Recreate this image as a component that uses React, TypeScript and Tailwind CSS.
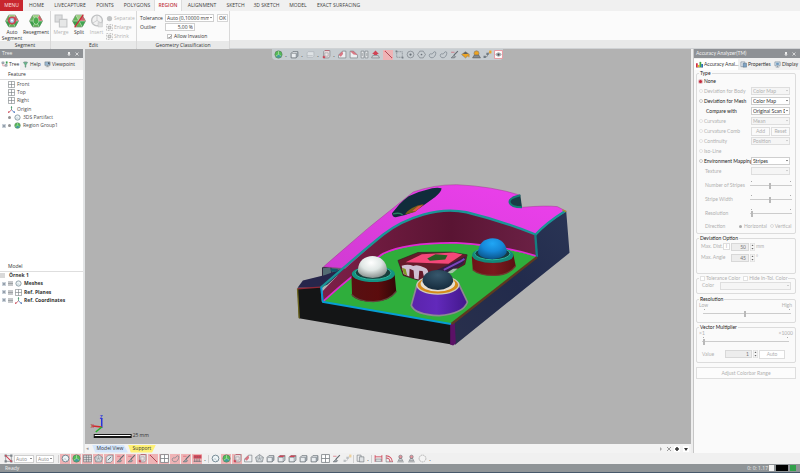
import React from "react";

type IconName =
  | "cube" | "sphere" | "globe" | "grid" | "mesh" | "poly" | "line" | "rect" | "circle" | "target"
  | "lasso" | "brush" | "bucket" | "bucket2" | "points" | "eye" | "half" | "halfR" | "book" | "arrow"
  | "axes" | "plane" | "corner" | "redcube" | "ghost" | "table" | "measure" | "angle" | "stamp" | "ring"
  | "copy" | "cross" | "help" | "view" | "tree" | "chart" | "props" | "display";

const dark = "#646b71";
const red = "#d04456";

function Glyph({ name }: { name: IconName }) {
  switch (name) {
    case "cube":
      return <><path d="M2 6l3-3h9v8l-3 3H2z" fill="#e9edf0" stroke={dark} strokeWidth="1.400" /><path d="M3 6h8v8" stroke={dark} fill="none" /><path d="M11 6l3-3v8l-3 3z" fill="#8d969d" /></>;
    case "redcube":
      return <><path d="M2 6l3-3h9v8l-3 3H2z" fill="#e9edf0" stroke={dark} strokeWidth="1.400" /><path d="M3 6h8v8M11 6l3-3" stroke={dark} fill="none" /><path d="M2 5.500l3-3h9l-3 3z" fill={red} /></>;
    case "ghost":
      return <path d="M2 5l2-2h10v8l-2 2H2zM2 10h10" fill="#dfe3e6" stroke="#a5acb2" />;
    case "sphere":
      return <><circle cx="8" cy="8" r="6" fill="#eef5f7" stroke="#6c828d" strokeWidth="1.6" /><path d="M4 11l3-3 3 4" fill="none" stroke="#9aabb3" /></>;
    case "globe":
      return <><circle cx="8" cy="8" r="6.5" fill="#53bb55" stroke="#5d7468" /><path d="M8 2v6l5 3M8 8l-5 3" stroke="#d8ecd0" fill="none" /><path d="M8 8l5 3a6 6 0 01-9 1z" fill="#3a8fbd" opacity=".7" /></>;
    case "grid":
      return <><path d="M1 2h14v12H1z" fill="#ddd" stroke={dark} /><path d="M1 6h14M1 10h14M6 2v12M10 2v12" stroke={dark} /></>;
    case "mesh":
      return <><path d="M8 1l7 5-2 8H3L1 6z" fill="#d5dadd" stroke={dark} /><path d="M1 6l7 2 7-2M8 8l-5 6M8 8l5 6M8 1v7" stroke="#8e969c" fill="none" /></>;
    case "poly":
      return <><path d="M2 6l4-4h8v9l-4 4H2z" fill="#dce4e8" stroke={dark} /><path d="M5 11l6-6" stroke={dark} strokeWidth="1.6" /></>;
    case "line":
      return <><path d="M2 2l12 12" stroke="#9c3945" strokeWidth="1.5" /><circle cx="2.5" cy="2.5" r="1.2" fill={red} /><circle cx="13.5" cy="13.5" r="1.2" fill={red} /></>;
    case "rect":
      return <><path d="M3 3h10v10H3z" fill="none" stroke="#697178" strokeDasharray="2 1" /><path d="M1 1h3v3H1zM12 12h3v3h-3z" fill="#777f86" /></>;
    case "circle":
      return <><circle cx="8" cy="8" r="6" fill="none" stroke="#697178" /><circle cx="8" cy="8" r="2" fill="#697178" /></>;
    case "target":
      return <><path d="M5 2h6l4 6-4 6H5L1 8z" fill="none" stroke="#697178" /><circle cx="8" cy="8" r="1.5" fill="#697178" /></>;
    case "lasso":
      return <path d="M3 12c-2-3 0-6 3-5s3-4 6-4 2 5 0 8-7 4-9 1z" fill="none" stroke="#78828a" strokeWidth="1.300" />;
    case "arrow":
      return <><path d="M8 1l6 6h-3v2H5V7H2z" fill={red} /><path d="M1 14l2-4h10l2 4z" fill="#d6dadd" stroke={dark} /></>;
    case "brush":
      return <><path d="M2 14l5-5 3 3-2 2z" fill="#9ba3a8" stroke={dark} /><path d="M7 9l7-7" stroke={dark} strokeWidth="2" /><path d="M2 4h6" stroke={red} /></>;
    case "bucket":
      return <><path d="M1 8l7-5 7 5-7 6z" fill="#eda423" stroke="#777" /><path d="M3 7l5-4 5 4" fill="#5d6265" /><path d="M14 9v4" stroke="#d88d1a" strokeWidth="2" /></>;
    case "bucket2":
      return <><circle cx="8" cy="6" r="4.500" fill="#eda423" stroke="#777" /><path d="M1 14l3-5h8l3 5z" fill="#838b90" stroke="#555" /></>;
    case "points":
      return <><path d="M2 12h5l3-7h4" stroke={dark} fill="none" /><path d="M11 1h4v5h-4z" fill="#eda423" /><path d="M1 10h4v4H1zM6 5h4v4H6z" fill="#717b82" /></>;
    case "eye":
      return <><path d="M1 1h14v14H1z" fill="#fff" stroke="#e88b94" strokeWidth="1.500" /><path d="M3 8q5-6 10 0-5 6-10 0z" fill="#c7cbce" stroke={dark} /><circle cx="8" cy="8" r="2" fill="#444a50" /></>;
    case "half":
      return <><path d="M1 14V9l7-7h6v12z" fill="#edf0f2" stroke={dark} /><path d="M1 9l7-7 1 5-4 5z" fill={red} opacity=".7" /></>;
    case "halfR":
      return <><path d="M15 14V9L8 2H2v12z" fill="#edf0f2" stroke={dark} /><path d="M2 2h6l7 7-7-1z" fill={red} opacity=".7" /></>;
    case "book":
      return <path d="M2 2h5v12H2zM9 2h5v12H9zM4 5v6M12 5v6" fill="#f0f2f3" stroke={dark} />;
    case "axes":
      return <><path d="M8 2v7" stroke="#3b915c" strokeWidth="1.6" /><path d="M8 9l-6 5" stroke="#c43a48" strokeWidth="1.6" /><path d="M8 9l6 5" stroke="#3565b5" strokeWidth="1.6" /><path d="M6 3.500L8 0l2 3.500" fill="#2f8a5a" /><path d="M0 15.500v-4l4 4z" fill="#c43a48" /><path d="M16 15.500v-4l-4 4z" fill="#3565b5" /></>;
    case "plane":
      return <path d="M1 1h14v14H1zM1 8h14M8 1v14" fill="#fff" stroke="#777d81" strokeWidth="1.400" />;
    case "corner":
      return <><path d="M3 3l2-2h9v10l-2 3H3z" fill="#f0e3e5" stroke={dark} /><path d="M2 11h3v3H2zM5 1h8" fill={red} stroke={red} /><path d="M5 5h6v6H5z" fill="none" stroke="#8d949a" /></>;
    case "table":
      return <><path d="M1 2h14v6H1z" fill={red} /><path d="M3 8v6M7 8v6M11 8v6M1 13h14M3 5h2M7 5h2M11 5h2" stroke={dark} strokeWidth="1.200" /></>;
    case "measure":
      return <><path d="M2 2v12M14 2v12M2 5h12" stroke={red} strokeWidth="1.500" /><path d="M3 9h10v4H3z" fill="#e7e9ea" stroke={dark} /></>;
    case "angle":
      return <><path d="M2 2v12h12" stroke={dark} fill="none" /><path d="M2 3a11 11 0 0111 11M2 7a7 7 0 017 7" stroke={red} strokeWidth="1.800" fill="none" /></>;
    case "stamp":
      return <><path d="M2 14h12M4 12h8L10 8H6z" fill="#cfd3d6" stroke={dark} /><circle cx="8" cy="5" r="3" fill="#e6969f" stroke={dark} /></>;
    case "ring":
      return <circle cx="8" cy="8" r="6" fill="#f4f4f4" stroke="#aaa" strokeWidth="1.500" strokeDasharray="3 1" />;
    case "copy":
      return <><path d="M2 2h7v11H2z" fill="#f1f2f3" stroke={dark} /><path d="M6 5h8v9H6z" fill="#dfe2e4" stroke={dark} /></>;
    case "cross":
      return <><path d="M3 3h10v10H3z" fill="#f4f4f4" stroke={dark} /><path d="M1 1h4v4H1zM11 11h4v4h-4zM11 1h4v4h-4zM1 11h4v4H1z" fill="#7d848a" /><path d="M2 2l12 12" stroke={red} strokeWidth="2" /></>;
    case "help":
      return <><path d="M3 3h10l-4 6v5H7V9z" fill="#65b98a" stroke="#598571" /><path d="M5 2h6" stroke={dark} /></>;
    case "view":
      return <><path d="M2 2h12v8H2z" fill="#9ab9d2" stroke={dark} /><path d="M4 13h8M8 10v3M9 4h3v4" stroke={dark} /></>;
    case "tree":
      return <><path d="M2 2h5v4H2zM9 8h5v4H9z" fill="#b9cddc" stroke={dark} /><path d="M4 6v5h5" stroke={red} fill="none" /><path d="M11 1h4v5h-4z" fill="#3a9d52" /></>;
    case "chart":
      return <><path d="M0 15h16" stroke={dark} /><path d="M0 5h4v9H0z" fill="#d02f48" /><path d="M4 9h4v5H4z" fill="#eab224" /><path d="M8 2h4v12H8z" fill="#41a747" /><path d="M12 7h4v7h-4z" fill="#296cb4" /></>;
    case "props":
      return <><path d="M2 2h9v11H2z" fill="#dfe7ef" stroke="#536577" /><path d="M7 5h8v9H7z" fill="#7ea3c4" stroke="#536577" /></>;
    case "display":
      return <><path d="M2 2h12v9H2z" fill="#d5e3ee" stroke="#536577" /><path d="M5 4h6v5H5z" fill="#6f99be" /><path d="M4 14h8M8 11v3" stroke="#536577" /></>;
  }
}

function Icon({ name, className = "size-[9px]" }: { name: IconName; className?: string }) {
  return (
    <svg viewBox="0 0 16 16" className={`shrink-0 ${className}`} aria-hidden="true">
      <Glyph name={name} />
    </svg>
  );
}

function HexIcon({ variant }: { variant: "auto" | "plain" | "split" }) {
  return (
    <svg viewBox="0 0 26 26" className="size-[14px]" aria-hidden="true">
      <path d="M7 2h12l6 11-6 11H7L1 13z" fill="#62b655" stroke="#7d927c" strokeWidth="1.500" />
      <path d="M7 2h12l-6 11z" fill="#9ecf86" />
      <path d="M19 2l6 11H13z" fill="#d3606b" />
      <path d="M1 13h12L7 24z" fill="#3d9d4a" />
      <path d="M13 13h12l-6 11z" fill="#42a552" />
      <path d="M1 13h24M7 2l12 22M19 2L7 24" stroke="#e6efe3" strokeWidth="1" />
      {variant === "auto" && <><circle cx="13" cy="12" r="6" fill="#a3c0e0" stroke="#cb4553" strokeWidth="3" /><circle cx="13" cy="12" r="2" fill="#fff" /></>}
      {variant === "plain" && <path d="M8 9l5-4 5 4v7l-5 4-5-4z" fill="#4bab4e" stroke="#dcead6" />}
      {variant === "split" && <path d="M21 1L5 25" stroke="#c62d3a" strokeWidth="2.500" />}
    </svg>
  );
}

function GhostIcon({ round = false }: { round?: boolean }) {
  return (
    <svg viewBox="0 0 26 26" className="size-[14px]" aria-hidden="true">
      {round ? (
        <><circle cx="13" cy="12" r="10" fill="#f1f1f1" stroke="#bfc1c2" strokeWidth="2.500" /><path d="M13 3v9l8 5M13 12l-8 5" fill="none" stroke="#c6c7c8" strokeWidth="1.500" /><path d="M15 16h8v8h-8z" fill="#e0e0e0" stroke="#c2c3c4" /></>
      ) : (
        <><path d="M2 2h13v13H2z" fill="#dcddde" stroke="#c2c4c5" strokeWidth="2" /><path d="M10 10h14v14H10z" fill="#e6e7e7" stroke="#c2c4c5" strokeWidth="2" /></>
      )}
    </svg>
  );
}

const ribbonTabs = [
  ["HOME", "w-[27px]"], ["LIVECAPTURE", "w-[40px]"], ["POINTS", "w-[30px]"], ["POLYGONS", "w-[34px]"],
  ["REGION", "w-[28px]"], ["ALIGNMENT", "w-[40px]"], ["SKETCH", "w-[27px]"], ["3D SKETCH", "w-[35px]"],
  ["MODEL", "w-[28px]"], ["EXACT SURFACING", "w-[53px]"],
];

function RibbonTabs() {
  return (
    <nav className="flex h-[11px] shrink-0 bg-[#f0f0f0] text-[5px] leading-[11px] text-[#3c3c3c]">
      <button className="w-[23px] bg-[#c8262e] text-[#ffe3e3]">MENU</button>
      {ribbonTabs.map(([label, width]) => (
        <button
          key={label}
          className={`${width} whitespace-nowrap text-center ${label === "REGION" ? "border-x border-[#dcdcdc] bg-[#fbfbfb] font-semibold text-[#bf3541]" : ""}`}
        >
          {label}
        </button>
      ))}
    </nav>
  );
}

function RibbonGroup({ title, className, children }: { title: string; className: string; children: React.ReactNode }) {
  return (
    <section className={`flex flex-col border-r border-[#d9d9d9] ${className}`}>
      <div className="flex flex-1 pt-[3px]">{children}</div>
      <h2 className="h-[8px] bg-[#e8e9e9] text-center leading-[8px]">{title}</h2>
    </section>
  );
}

function BigButton({ label, className, children, disabled = false }: { label: string; className: string; children: React.ReactNode; disabled?: boolean }) {
  return (
    <button disabled={disabled} className={`flex flex-col items-center leading-[6px] ${className} ${disabled ? "text-[#b4b4b4]" : ""}`}>
      {children}
      <span className="mt-px">{label}</span>
    </button>
  );
}

function Ribbon() {
  return (
    <div className="flex h-[38px] shrink-0 border-b border-[#cfd2d4] bg-[#fbfbfb] text-[5px] text-[#333]">
      <RibbonGroup title="Segment" className="w-[51px]">
        <BigButton label="Auto Segment" className="w-[24px]"><HexIcon variant="auto" /></BigButton>
        <BigButton label="Resegment" className="w-[24px]"><HexIcon variant="plain" /></BigButton>
      </RibbonGroup>
      <RibbonGroup title="Edit" className="w-[86px]">
        <BigButton label="Merge" className="w-[20px]" disabled><GhostIcon /></BigButton>
        <BigButton label="Split" className="w-[16px]"><HexIcon variant="split" /></BigButton>
        <BigButton label="Insert" className="w-[19px]" disabled><GhostIcon round /></BigButton>
        <div className="flex flex-col text-[#b4b4b4]">
          {["Separate", "Enlarge", "Shrink"].map((label, i) => (
            <button key={label} disabled className="flex h-[9px] items-center gap-px">
              <svg viewBox="0 0 16 16" className="size-[7px]" aria-hidden="true">
                {i === 0 ? <circle cx="8" cy="8" r="6" fill="#c2c4c5" /> : <><path d="M1 1h14v14H1z" fill="none" stroke="#bbb" strokeDasharray="4 3" strokeWidth="2" /><path d="M5 5h6v6H5z" fill="#e4e4e4" stroke="#aaa" strokeWidth="2" /></>}
              </svg>
              {label}
            </button>
          ))}
        </div>
      </RibbonGroup>
      <RibbonGroup title="Geometry Classification" className="w-[93px]">
        <div className="grid w-full grid-cols-[25px_1fr] content-start px-[3px] leading-[9px]">
          <label htmlFor="tolerance">Tolerance</label>
          <div className="flex gap-[3px]">
            <Select id="tolerance" value="Auto (0,10000 mm)" className="w-[49px]" />
            <button className="h-[8px] w-[11px] border border-[#d6d6d6] bg-white leading-[6px]">OK</button>
          </div>
          <label htmlFor="outlier">Outlier</label>
          <input id="outlier" defaultValue="5,00 %" className="h-[8px] w-[30px] border border-[#cfcfcf] bg-white pr-px text-right leading-[6px]" />
          <label className="col-start-2 flex items-center gap-[2px] pl-[2px]">
            <Check checked />Allow Invasion
          </label>
        </div>
      </RibbonGroup>
      <div className="flex flex-1 flex-col justify-end"><div className="h-[8px] bg-[#e8e9e9]" /></div>
    </div>
  );
}

function Check({ checked = false, disabled = false }: { checked?: boolean; disabled?: boolean }) {
  return (
    <span className="grid size-[5px] shrink-0 place-items-center">
      <input type="checkbox" defaultChecked={checked} disabled={disabled} className="col-start-1 row-start-1 size-[5px] appearance-none border border-[#c4c4c4] bg-white disabled:border-[#e2e2e2]" />
      {checked && <svg viewBox="0 0 8 8" className="pointer-events-none col-start-1 row-start-1 size-[4px]"><path d="M1 4l2 2 4-5" fill="none" stroke="#666" strokeWidth="1.500" /></svg>}
    </span>
  );
}

function Select({ id, value, className, disabled = false, label }: { id?: string; value: string; className: string; disabled?: boolean; label?: string }) {
  return (
    <span className={`grid h-[8px] shrink-0 ${className}`}>
      <select id={id} aria-label={label} disabled={disabled} className="col-start-1 row-start-1 h-[8px] w-full min-w-0 appearance-none border border-[#cfcfcf] bg-white pr-[4px] pl-px leading-[6px] opacity-100 disabled:border-[#dedede] disabled:bg-[#f5f5f5] disabled:text-[#b0b0b0]">
        <option>{value}</option>
      </select>
      <svg viewBox="0 0 6 4" className={`pointer-events-none col-start-1 row-start-1 mr-[2px] w-[2px] self-center justify-self-end ${disabled ? "text-[#b5b5b5]" : "text-[#444]"}`} aria-hidden="true">
        <path d="M0 0h6L3 4z" fill="currentColor" />
      </svg>
    </span>
  );
}

function PanelHeader({ title }: { title: string }) {
  return (
    <header className="flex h-[9px] shrink-0 items-center bg-[#8e9195] px-[2px] text-[#f3f3f3]">
      <h2 className="flex-1">{title}</h2>
      <button aria-label="Pin" className="mr-[4px]"><svg viewBox="0 0 8 8" className="size-[4px]"><path d="M2 0h4v4h1v1H1V4h1zM3 5h2v3H3z" fill="#eee" /></svg></button>
      <button aria-label="Close" className="mr-[2px]"><svg viewBox="0 0 8 8" className="size-[4px]"><path d="M1 1l6 6M7 1L1 7" stroke="#eee" strokeWidth="1.500" /></svg></button>
    </header>
  );
}

function PanelTabs({ tabs }: { tabs: { label: string; icon: IconName; width: string }[] }) {
  return (
    <div role="tablist" className="flex h-[12px] shrink-0 items-end bg-[#f0f0f0]">
      {tabs.map((tab, i) => (
        <button key={tab.label} role="tab" aria-selected={i === 0} className={`flex h-[11px] items-center gap-px whitespace-nowrap ${tab.width} ${i === 0 ? "bg-white" : ""}`}>
          <Icon name={tab.icon} className="size-[7px]" />
          {tab.label}
        </button>
      ))}
    </div>
  );
}

function Expander() {
  return <svg viewBox="0 0 8 8" className="size-[4px] shrink-0"><path d="M0 0h8v8H0z" fill="#c9d1d9" /><path d="M2 4h4M4 2v4" stroke="#75818e" strokeWidth="1.500" /></svg>;
}

function LeftPanel() {
  const features: { label: string; icon: IconName; dot?: boolean; open?: boolean }[] = [
    { label: "Front", icon: "plane" }, { label: "Top", icon: "plane" }, { label: "Right", icon: "plane" },
    { label: "Origin", icon: "axes" }, { label: "3DS Partifact", icon: "sphere", dot: true },
    { label: "Region Group1", icon: "globe", dot: true, open: true },
  ];
  const models: { label: string; icon: IconName }[] = [
    { label: "Meshes", icon: "sphere" }, { label: "Ref. Planes", icon: "plane" }, { label: "Ref. Coordinates", icon: "axes" },
  ];
  return (
    <aside className="flex w-[83px] shrink-0 flex-col bg-white">
      <PanelHeader title="Tree" />
      <PanelTabs tabs={[
        { label: "Tree", icon: "tree", width: "w-[20px] pl-px" },
        { label: "Help", icon: "help", width: "w-[22px] pl-[2px]" },
        { label: "Viewpoint", icon: "view", width: "w-[36px] pl-[2px]" },
      ]} />
      <section className="flex-1">
        <h3 className="h-[10px] border-b border-[#dedede] pl-[8px] leading-[8px]">Feature</h3>
        <ul className="flex h-[50px] flex-col justify-between text-[#4c4c4c]">
          {features.map((f) => (
            <li key={f.label} className={`flex h-[8px] items-center ${f.dot ? "gap-[2px] pl-[2px]" : "gap-[2px] pl-[8px]"}`}>
              {f.dot && <><span className="w-[4px]">{f.open && <Expander />}</span><span className="mr-px size-[3px] rounded-full bg-[#929292]" /></>}
              <Icon name={f.icon} className="size-[7px]" />
              {f.label}
            </li>
          ))}
        </ul>
      </section>
      <section className="flex-1">
        <h3 className="h-[10px] border-b border-[#dedede] pt-px pl-[8px] leading-[7px]">Model</h3>
        <ul className="flex h-[33px] flex-col justify-between font-bold text-[#333]">
          <li className="flex h-[8px] items-center gap-[4px]"><span className="size-[5px] bg-[#d9d9d9]" />Örnek 1</li>
          {models.map((m) => (
            <li key={m.label} className="flex h-[8px] items-center gap-[2px] pl-[2px]">
              <Expander /><span className="flex size-[5px] items-center bg-[#c6c8ca]"><span className="h-px w-full bg-[#9fa3a6]" /></span><Icon name={m.icon} className="size-[7px]" />{m.label}
            </li>
          ))}
        </ul>
      </section>
    </aside>
  );
}

function Part() {
  return (
    <g transform="translate(290 175) scale(.33333)">
      <defs>
        <linearGradient id="top" x1="0" y1="1" x2="1" y2="0"><stop offset="0" stopColor="#d03bd2" /><stop offset="1" stopColor="#ee40ee" /></linearGradient>
        <linearGradient id="wall" x1="0" x2="1"><stop offset="0" stopColor="#7d2048" /><stop offset=".6" stopColor="#5a1433" /><stop offset="1" stopColor="#6b2145" /></linearGradient>
        <linearGradient id="cyl" x1="0" x2="1"><stop offset="0" stopColor="#571012" /><stop offset=".6" stopColor="#5b0c0d" /><stop offset="1" stopColor="#320708" /></linearGradient>
        <linearGradient id="cyl2" x1="0" x2="1"><stop offset="0" stopColor="#6c1217" /><stop offset=".5" stopColor="#7b191e" /><stop offset="1" stopColor="#5a1013" /></linearGradient>
        <linearGradient id="cone" x1="0" x2="1"><stop offset="0" stopColor="#5a24ab" /><stop offset=".45" stopColor="#6229bb" /><stop offset="1" stopColor="#42178b" /></linearGradient>
        <linearGradient id="side" x1="0" y1="1" x2="1" y2="0"><stop offset="0" stopColor="#29304c" /><stop offset=".5" stopColor="#222b4c" /><stop offset="1" stopColor="#2a3555" /></linearGradient>
        <radialGradient id="white" cx=".45" cy=".3" r=".7"><stop offset="0" stopColor="#fff" /><stop offset=".5" stopColor="#e0e7e5" /><stop offset="1" stopColor="#89918f" /></radialGradient>
        <radialGradient id="blue" cx=".5" cy=".25" r=".75"><stop offset="0" stopColor="#20a6f5" /><stop offset=".5" stopColor="#1688d8" /><stop offset="1" stopColor="#0b568c" /></radialGradient>
        <radialGradient id="slate" cx=".5" cy=".25" r=".7"><stop offset="0" stopColor="#37576c" /><stop offset="1" stopColor="#172e40" /></radialGradient>
      </defs>
      <path d="M738 180Q770 145 830 110L840 235L495 512L487 450L742 248z" fill="url(#side)" />
      <path d="M22 342L92 338L95 382L485 450V511L26 432z" fill="#141516" />
      <path d="M481 449L495 446L498 507L490 514L481 511z" fill="#5b1166" />
      <path d="M97 278L165 275L160 300L97 312z" fill="#60646b" />
      <path d="M97 280L122 277L126 304L97 311z" fill="#536b73" stroke="#32283d" strokeWidth="3" />
      <path d="M22 340L38 318L105 302L170 278L112 330L90 340z" fill="#27264b" />
      <path d="M122 282l22 2-6 9-16-2z" fill="#10596a" />
      <path d="M22 343L91 338" stroke="#8e2837" strokeWidth="4" /><path d="M22 343L27 432" stroke="#6b641d" strokeWidth="4" />
      <path d="M98 382L98 350Q190 250 280 180Q330 140 400 120Q470 100 530 113Q640 140 738 180L741 247Q620 210 500 207Q350 205 280 239Q190 300 98 382z" fill="url(#wall)" />
      <path d="M98 382Q195 295 280 239Q350 205 500 207Q640 215 741 247L485 449z" fill="#2fae3c" />
      <path d="M98 382Q195 293 280 237Q350 203 500 205Q640 213 741 245" fill="none" stroke="#df2bd4" strokeWidth="5" />
      <path d="M370 52Q430 30 500 30Q610 35 692 62Q660 68 660 80Q665 98 700 98Q770 92 803 96L830 110Q770 145 738 180Q640 140 530 113Q470 100 400 120Q330 140 280 180Q235 220 165 282L100 277Q230 160 370 52z" fill="url(#top)" stroke="#a23c8f" strokeWidth="1.500" />
      <path d="M692 62L697 98Q662 98 658 80Q658 68 692 62z" fill="#173d46" /><path d="M692 62Q656 70 660 84Q664 98 697 98" fill="none" stroke="#137e75" strokeWidth="6" />
      <path d="M306 116C321 98 336 78 356 65Q382 51 408 46Q438 36 455 41Q455 52 436 67L375 111Q350 122 317 128Q307 128 306 116z" fill="#102c3b" />
      <path d="M383 93L402 88L375 112L345 120Q353 105 383 93z" fill="#786019" /><path d="M384 95L400 91L377 110L367 109z" fill="#df5543" /><path d="M309 118Q330 113 338 121" stroke="#267f62" strokeWidth="4" fill="none" />
      <path d="M92 340Q208 238 280 180Q330 140 400 120Q470 100 530 113Q640 140 738 180Q768 146 827 109" fill="none" stroke="#1a9596" strokeWidth="7" /><path d="M93 338L98 382" stroke="#0796d1" strokeWidth="6" />
      <path d="M737 180L742 247" stroke="#157e80" strokeWidth="7" />
      <path d="M96 382L483 449" stroke="#069ed4" strokeWidth="6" /><path d="M485 449L742 248" stroke="#5d3a20" strokeWidth="7" /><path d="M818 106l12 5" stroke="#a49c28" strokeWidth="4" />

      <path d="M324 258L384 234L483 233L532 241L525 270L444 315L388 318L340 303z" fill="#651b2a" stroke="#371a22" strokeWidth="2" />
      <path d="M347 263L396 239L491 234L518 240L476 268z" fill="#f34779" /><path d="M412 252L437 239L473 242L466 255L420 259z" fill="#266125" />
      <path d="M335 274Q356 268 370 275Q382 268 405 280Q419 285 416 313L403 310L398 290L388 289L386 315L373 312L371 288L359 283L358 306L341 299z" fill="#cfc1d2" /><path d="M336 280L347 284L352 303L342 299z" fill="#829724" />
      <path d="M431 291L470 273L528 245L520 269L461 304z" fill="#301e43" /><path d="M462 286L512 261L524 253" stroke="#7c44bd" strokeWidth="6" fill="none" /><path d="M466 298L490 283L504 282L488 296z" fill="#a2c3a5" />

      <path d="M184 300L186 365Q204 383 250 382Q298 382 319 353L314 300z" fill="url(#cyl)" /><path d="M184 360Q204 382 250 382Q298 380 319 351" stroke="#61463d" strokeWidth="4" fill="none" />
      <ellipse cx="250" cy="299" rx="65" ry="24" fill="#139382" /><ellipse cx="249" cy="295" rx="54" ry="20" fill="#183f3d" stroke="#31b7a0" strokeWidth="3" />
      <path d="M204 293C198 231 291 228 291 289Q285 308 248 311Q212 309 204 293z" fill="url(#white)" />
      <path d="M546 246L549 286Q570 304 615 303Q658 302 678 274L671 240z" fill="url(#cyl2)" /><path d="M549 286Q570 304 615 303Q658 302 678 274" stroke="#70392f" strokeWidth="4" fill="none" />
      <ellipse cx="609" cy="242" rx="62" ry="24" fill="#128878" /><ellipse cx="608" cy="237" rx="53" ry="19" fill="#173c43" stroke="#2cb59d" strokeWidth="3" />
      <path d="M565 236C563 178 651 176 651 233Q645 251 606 254Q571 251 565 236z" fill="url(#blue)" />
      <path d="M381 331L364 393Q374 421 448 424Q521 418 533 383L506 327z" fill="url(#cone)" stroke="#8d8a91" strokeWidth="5" />
      <ellipse cx="444" cy="332" rx="63" ry="27" fill="#d58b19" stroke="#cec9bb" strokeWidth="4" /><ellipse cx="444" cy="328" rx="52" ry="23" fill="#e6ded1" /><path d="M398 323C392 277 492 273 490 322Q483 344 444 347Q406 345 398 323z" fill="url(#slate)" />
    </g>
  );
}

function ToolButton({ name, active = false, className = "" }: { name: IconName; active?: boolean; className?: string }) {
  return (
    <button aria-label={name} className={`grid size-[10px] shrink-0 place-items-center ${active ? "bg-[#efb3b5]" : ""} ${className}`}>
      <Icon name={name} />
    </button>
  );
}

function Dot() {
  return <span className="w-[4px] shrink-0 text-center leading-[10px] font-bold text-[#555]">.</span>;
}

const sceneTools: IconName[] = ["half", "halfR", "book", "arrow"];
const selectTools: IconName[] = ["rect", "circle", "target", "lasso", "lasso", "brush", "bucket", "bucket2", "points", "eye"];

function Viewport() {
  return (
    <main className="flex min-w-0 flex-1 flex-col">
      <div className="relative min-h-0 flex-1 bg-[#b2b2b2]">
        <svg viewBox="85 49 606 396" className="size-full" role="img" aria-label="Part model">
          <Part />
          <path d="M101 429V419" stroke="#2730dd" strokeWidth="1.500" />
          <path d="M101 428L92 427" stroke="#d22929" strokeWidth="1.500" />
          <path d="M101 428L95 433" stroke="#25b52c" strokeWidth="1.500" />
          <text x="99" y="420" fontSize="5" fontWeight="600" fill="#2730dd">Z</text>
          <text x="90" y="429" fontSize="5" fontWeight="600" fill="#c22b2b">X</text>
          <path d="M93 435h38v4H93z" fill="#161616" /><path d="M94 436h36v1H94z" fill="#fff" />
          <text x="132" y="438" fontSize="5" fill="#333">25 mm</text>
        </svg>
        <div className="absolute top-0 left-[187px] flex h-[11px] w-[231px] items-center gap-px rounded-b-sm bg-[#c7cdd1] pl-px">
          <ToolButton name="globe" /><Dot /><ToolButton name="cube" /><Dot /><ToolButton name="ghost" /><Dot />
          <ToolButton name="corner" /><Dot />
          {sceneTools.map((n) => <ToolButton key={n} name={n} />)}
          <ToolButton name="line" active className="ml-[2px]" />
          {selectTools.map((n, i) => <ToolButton key={i} name={n} />)}
        </div>
      </div>
      <div className="flex h-[9px] shrink-0 items-center bg-[#f3f3f3] pl-px">
        <span className="w-[6px] text-[#999]">◂</span>
        <button className="h-[8px] w-[36px] bg-[#d4e6fc] text-[#333] [clip-path:polygon(0_0,88%_0,100%_100%,9%_100%)]">Model View</button>
        <button className="h-[8px] w-[28px] bg-[#fff176] text-[#333] [clip-path:polygon(0_0,100%_0,86%_100%,10%_100%)]">Support</button>
        <span className="flex-1" />
        <div className="flex items-center gap-[2px] pr-[2px] text-[#555]">
          <button aria-label="Next" className="size-[6px]"><svg viewBox="0 0 6 6" className="size-full"><path d="M2 1l2 2-2 2z" fill="#aaa" /></svg></button>
          <button aria-label="Close view" className="size-[6px]"><svg viewBox="0 0 6 6" className="size-full"><path d="M1 1l4 4M5 1L1 5" stroke="#999" /></svg></button>
          <button aria-label="Pin view" className="size-[6px] bg-white"><svg viewBox="0 0 6 6" className="size-full"><path d="M1 3h4M3 1v4" stroke="#333" strokeWidth="1.500" /></svg></button>
          <button aria-label="Views" className="ml-px size-[6px] bg-white"><svg viewBox="0 0 6 6" className="size-full"><path d="M1 2h4L3 5z" fill="#333" /></svg></button>
        </div>
      </div>
    </main>
  );
}

function Group({ title, children, className = "" }: { title: React.ReactNode; children: React.ReactNode; className?: string }) {
  return (
    <fieldset className={`min-w-0 rounded-[2px] border border-[#dcdcdc] pl-[2px] ${className}`}>
      <legend className="h-[6px] px-px leading-[6px] text-[#222]">{title}</legend>
      {children}
    </fieldset>
  );
}

function RadioRow({ label, checked = false, disabled = false, name = "type", children }: { label: string; checked?: boolean; disabled?: boolean; name?: string; children?: React.ReactNode }) {
  return (
    <div className="flex h-[10px] items-center">
      <label className={`flex w-[52px] items-center gap-px whitespace-nowrap ${disabled ? "text-[#b0b0b0]" : "text-[#222]"}`}>
        {checked ? (
          <input type="radio" name={name} defaultChecked disabled={disabled} className="mr-px size-[3px] shrink-0 appearance-none rounded-full bg-[#c3263a] ring-1 ring-[#e4bfc3]" />
        ) : (
          <input type="radio" name={name} disabled={disabled} className="size-[4px] shrink-0 appearance-none rounded-full border border-[#cacaca] bg-white disabled:border-[#e4e4e4]" />
        )}
        {label}
      </label>
      {children}
    </div>
  );
}

function Range({ id, value, label }: { id?: string; value: number; label?: string }) {
  return (
    <span className="flex flex-1 flex-col px-px">
      <span className="flex justify-between px-px"><i className="h-px w-px bg-[#aaa]" /><i className="h-px w-px bg-[#aaa]" /></span>
      <input
        id={id}
        aria-label={label}
        type="range"
        defaultValue={value}
        disabled
        className="h-[7px] w-full appearance-none bg-transparent bg-linear-to-b from-transparent from-45% via-[#cccccc] via-50% to-transparent to-60% [&::-webkit-slider-thumb]:h-[6px] [&::-webkit-slider-thumb]:w-[2px] [&::-webkit-slider-thumb]:appearance-none [&::-webkit-slider-thumb]:bg-[#b9b9b9]"
      />
    </span>
  );
}

function Spin({ id, value, className }: { id: string; value: string; className: string }) {
  return (
    <>
      <input id={id} defaultValue={value} disabled className={`h-[8px] border border-[#d8d8d8] bg-[#ededed] pr-[2px] text-right text-[#777] ${className}`} />
      <svg viewBox="0 0 10 16" className="ml-px h-[8px] w-[5px] shrink-0" aria-hidden="true"><path d="M.500.500h9v15h-9z" fill="#f5f5f5" stroke="#ccc" /><path d="M3 6l2-3 2 3zM3 10l2 3 2-3z" fill="#666" /></svg>
    </>
  );
}

function RightPanel() {
  const off = "text-[#b0b0b0]";
  return (
    <aside className="flex w-[106px] shrink-0 flex-col bg-[#fafafa] font-['Lato','Open_Sans',sans-serif]">
      <PanelHeader title="Accuracy Analyzer(TM)" />
      <PanelTabs tabs={[
        { label: "Accuracy Anal...", icon: "chart", width: "w-[44px] pl-[2px]" },
        { label: "Properties", icon: "props", width: "w-[34px] pl-[2px]" },
        { label: "Display", icon: "display", width: "w-[28px] pl-[2px]" },
      ]} />
      <div className="flex flex-col pr-[4px] pl-[2px]">
        <Group title="Type" className="h-[164px]">
          <RadioRow label="None" checked />
          <RadioRow label="Deviation for Body" disabled><Select value="Color Map" label="Body colour" className="w-[39px]" disabled /></RadioRow>
          <RadioRow label="Deviation for Mesh"><Select value="Color Map" label="Mesh colour" className="w-[39px]" /></RadioRow>
          <div className="flex h-[10px] items-center"><label htmlFor="compare" className="w-[52px] pl-[7px] text-[#222]">Compare with</label><Select id="compare" value="Original Scan D" className="w-[39px]" /></div>
          <RadioRow label="Curvature" disabled><Select value="Mean" label="Curvature kind" className="w-[39px]" disabled /></RadioRow>
          <RadioRow label="Curvature Comb" disabled>
            <button disabled className="mr-px h-[9px] w-[19px] border border-[#dedede] leading-[7px] text-[#b0b0b0]">Add</button>
            <button disabled className="h-[9px] w-[19px] border border-[#dedede] leading-[7px] text-[#b0b0b0]">Reset</button>
          </RadioRow>
          <RadioRow label="Continuity" disabled><Select value="Position" label="Continuity kind" className="w-[39px]" disabled /></RadioRow>
          <RadioRow label="Iso-Line" disabled />
          <RadioRow label="Environment Mapping"><Select value="Stripes" label="Environment" className="w-[39px]" /></RadioRow>
          <div className={`mb-[2px] flex h-[10px] items-center ${off}`}><label htmlFor="texture" className="w-[52px] pl-[6px]">Texture</label><Select id="texture" value="" className="w-[39px]" disabled /></div>
          {[["Number of Stripes", 48], ["Stripe Width", 48], ["Resolution", 2]].map(([label, value]) => (
            <div key={label} className={`flex h-[14px] items-center pr-[2px] ${off}`}>
              <label htmlFor={String(label)} className="w-[50px] pl-[6px] whitespace-nowrap">{label}</label>
              <Range id={String(label)} value={Number(value)} />
            </div>
          ))}
          <div className={`flex h-[12px] items-center gap-[3px] pl-[6px] ${off}`}>
            <span className="w-[31px]">Direction</span>
            <label className="flex items-center gap-[2px]"><input type="radio" name="dir" defaultChecked disabled className="size-[3px] appearance-none rounded-full bg-[#aaa]" />Horizontal</label>
            <label className="flex items-center gap-px"><input type="radio" name="dir" disabled className="size-[4px] appearance-none rounded-full border border-[#ddd]" />Vertical</label>
          </div>
        </Group>
        <Group title="Deviation Option" className="mt-px h-[39px]">
          <div className={`flex h-[11px] items-center pl-[2px] ${off}`}><label htmlFor="dist" className="w-[22px] whitespace-nowrap">Max. Dist.</label><input aria-label="Distance sign" disabled defaultValue="I" className="mr-px h-[7px] w-[7px] border border-[#ddd] bg-white text-center" /><Spin id="dist" value="50" className="w-[18px]" /><span className="pl-px">mm</span></div>
          <div className={`flex h-[11px] items-center pl-[2px] ${off}`}><label htmlFor="ang" className="w-[30px] whitespace-nowrap">Max. Angle</label><Spin id="ang" value="45" className="w-[18px]" /><span className="pl-px">°</span></div>
        </Group>
        <Group className="mt-px h-[19px]" title={
          <span className={`flex gap-[3px] whitespace-nowrap ${off}`}>
            <label className="flex items-center gap-px"><Check disabled />Tolerance Color</label>
            <label className="flex items-center gap-px"><Check disabled />Hide In-Tol. Color</label>
          </span>
        }>
          <div className={`flex h-[9px] items-center pl-[3px] ${off}`}><label htmlFor="color" className="w-[18px]">Color</label><Select id="color" value="" className="w-[71px]" disabled /></div>
        </Group>
        <Group title="Resolution" className="mt-[2px] h-[27px]">
          <div className={`flex justify-between pr-[3px] leading-[7px] ${off}`}><span>Low</span><span>High</span></div>
          <div className="flex px-[3px]"><Range value={48} label="Resolution" /></div>
        </Group>
        <Group title="Vector Multiplier" className="mt-px h-[39px]">
          <div className={`flex justify-between pr-[2px] leading-[7px] ${off}`}><span>×1</span><span>×1000</span></div>
          <div className="flex pr-[5px] pl-[2px]"><Range value={1} label="Vector multiplier" /></div>
          <div className={`mt-[4px] flex h-[10px] items-center pl-[3px] ${off}`}><label htmlFor="val" className="w-[23px]">Value</label><Spin id="val" value="1" className="w-[27px]" /><button disabled className="ml-px h-[9px] w-[26px] border border-[#ddd] bg-white leading-[7px]">Auto</button></div>
        </Group>
        <button disabled className={`mt-[4px] h-[12px] border border-[#dedede] bg-[#fcfcfc] ${off}`}>Adjust Colorbar Range</button>
      </div>
    </aside>
  );
}

const filterTools: IconName[] = ["sphere", "globe", "grid", "mesh", "poly", "brush", "brush", "corner", "line", "plane", "lasso", "brush", "table"];
const entityTools: IconName[] = ["sphere", "globe", "corner", "half", "mesh", "cube", "redcube", "redcube", "cube", "cube", "plane", "brush", "points"];
const measureTools: IconName[] = ["measure", "angle", "stamp", "stamp", "ring"];

function Divider() {
  return <span className="h-[8px] w-px shrink-0 bg-[#cfcfcf]" />;
}

function BottomToolbar() {
  return (
    <div className="flex h-[11px] shrink-0 items-center gap-px bg-[#f0f0f0] pl-[3px] text-[#888]">
      <ToolButton name="cross" />
      <Select value="Auto" label="Selection" className="w-[20px]" /><Select value="Auto" label="Filter" className="ml-px mr-[3px] w-[18px]" />
      <Divider />
      {filterTools.map((n, i) => <ToolButton key={i} name={n} active />)}
      <Dot /><Divider />
      {entityTools.map((n, i) => <ToolButton key={i} name={n} active={i === 1 || i === 2} className={i === 12 ? "opacity-40" : ""} />)}
      <Divider />
      <ToolButton name="copy" /><Dot />
      <Divider />
      {measureTools.map((n, i) => <ToolButton key={i} name={n} />)}
      <Dot />
    </div>
  );
}

export default function App() {
  return (
    <div className="flex h-screen flex-col overflow-hidden bg-[#f0f0f0] font-['Open_Sans','Noto_Sans',sans-serif] text-[5px] leading-[7px] text-[#333]">
      <RibbonTabs />
      <Ribbon />
      <div className="flex min-h-0 flex-1">
        <LeftPanel />
        <div className="w-[2px] shrink-0 bg-[#e3e5e6]" />
        <Viewport />
        <div className="w-[3px] shrink-0 border-r border-[#c6c6c6] bg-[#ededed]" />
        <RightPanel />
      </div>
      <BottomToolbar />
      <footer className="flex h-[9px] shrink-0 items-center border-b border-[#46586a] bg-[#8f9497] pr-[4px] pl-[5px] text-[#eee]">
        <span className="flex-1">Ready</span>
        <span>0: 0: 1.17</span>
        <span className="ml-px h-[6px] w-[5px] bg-[#f2f2f2]" />
        <span className="ml-[2px] h-[6px] w-[12px] bg-black" />
        <span className="ml-[2px] size-[6px] bg-[#31a04a]" />
      </footer>
    </div>
  );
}
